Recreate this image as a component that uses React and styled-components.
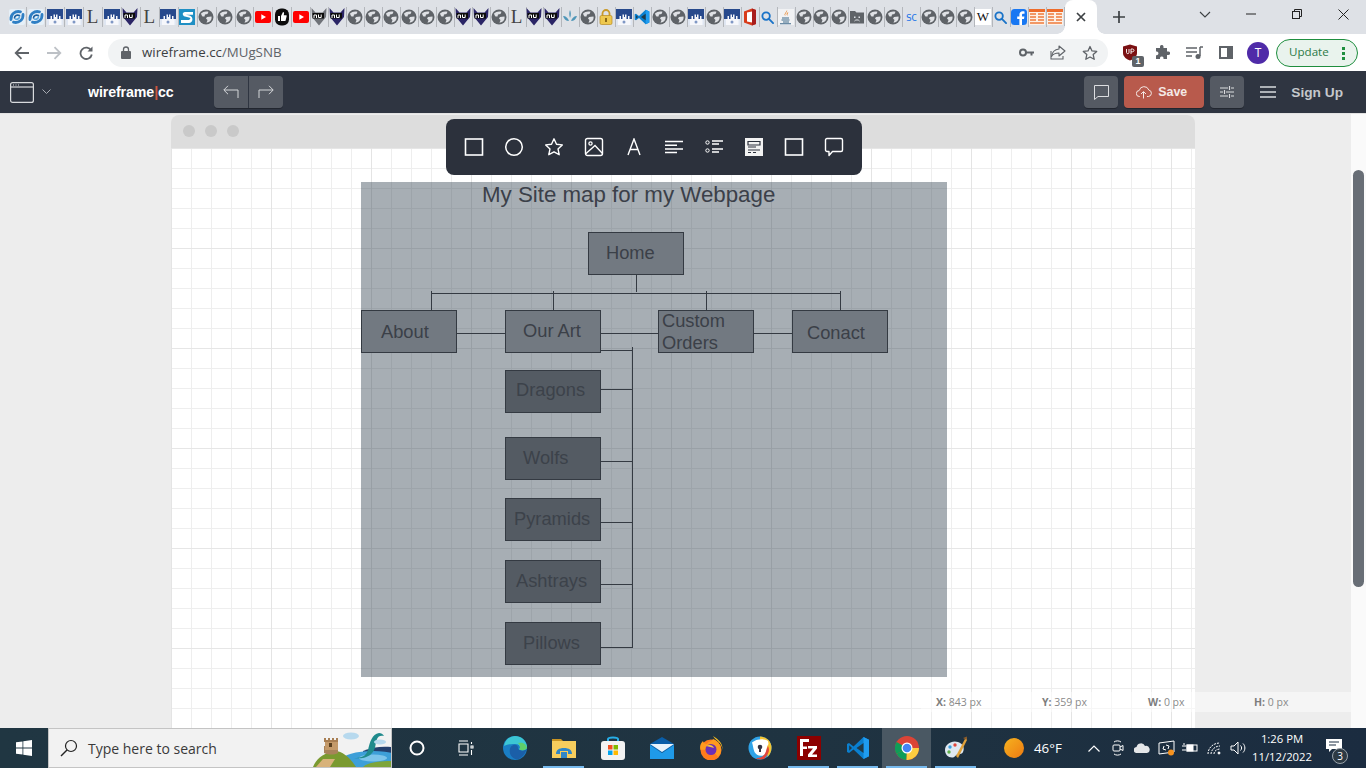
import React from "react";
import styled, { createGlobalStyle } from "styled-components";

const Global = createGlobalStyle`
  html, body { margin: 0; padding: 0; width: 1366px; height: 768px; overflow: hidden; background: #ededed; }
  * { box-sizing: border-box; }
  #root { width: 1366px; height: 768px; }
`;

const Screen = styled.div`
  width: 1366px; height: 768px; display: flex; flex-direction: column; overflow: hidden;
  font-family: "Liberation Sans", Arial, sans-serif;
`;

/* ---------- browser tab strip ---------- */
const TabStrip = styled.div`
  height: 34px; flex: none; background: #dee1e6; display: flex; align-items: center; padding-left: 7.5px;
`;
const TabSlot = styled.div`
  width: ${p => p.$w}px; height: 20px; flex: none; display: flex; align-items: center; justify-content: center;
  box-shadow: 1px 0 0 #b4b7bc;
`;
const ActiveTab = styled.div`
  width: 32px; height: 34px; flex: none; margin-left: 1px; background: #fff; border-radius: 8px 8px 0 0;
  display: flex; align-items: center; justify-content: center; position: relative; align-self: flex-end;
  &::before, &::after { content: ""; position: absolute; bottom: 0; width: 8px; height: 8px; }
  &::before { left: -8px; background: radial-gradient(circle at 0 0, #dee1e6 7.5px, #fff 8px); }
  &::after { right: -8px; background: radial-gradient(circle at 100% 0, #dee1e6 7.5px, #fff 8px); }
`;
const NewTab = styled.div`
  width: 20px; height: 20px; margin-left: 12px; display: flex; align-items: center; justify-content: center;
`;
const WinControls = styled.div`
  margin-left: auto; display: flex; height: 34px;
`;
const WinBtn = styled.div`
  width: 46px; display: flex; align-items: center; justify-content: center; padding-bottom: 6px;
`;
const TabLetter = styled.span`
  font-family: "Liberation Serif", serif; font-size: 19px; line-height: 16px; color: #444;
`;
const WikiBox = styled.span`
  width: 16px; height: 16px; background: #fff; color: #111; font-family: "Liberation Serif", serif;
  font-size: 13px; line-height: 16px; text-align: center; display: block;
`;
const SCText = styled.span`
  font-family: "DejaVu Sans Mono", monospace; font-size: 9.5px; color: #1a73e8; letter-spacing: -0.5px;
`;

/* ---------- browser toolbar ---------- */
const Toolbar = styled.div`
  height: 37px; flex: none; background: #fff; display: flex; align-items: center; position: relative;
`;
const NavBtn = styled.div`
  width: 32px; height: 28px; display: flex; align-items: center; justify-content: center; flex: none;
`;
const NavGroup = styled.div`
  display: flex; padding-left: 6px; width: 108px; flex: none;
`;
const Omnibox = styled.div`
  width: 1000px; height: 28px; flex: none; background: #f1f3f4; border-radius: 14px; display: flex; align-items: center;
  padding: 0 8px 0 13px;
`;
const Url = styled.div`
  margin-left: 11px; padding-bottom: 2px; font-family: "Open Sans", sans-serif; font-size: 13.3px; color: #5f6368;
  span { color: #3c4043; }
`;
const OmniIcons = styled.div`
  margin-left: auto; display: flex; gap: 12px;
`;
const OmniIcon = styled.div`
  width: 20px; height: 20px; display: flex; align-items: center; justify-content: center;
`;
const ExtGroup = styled.div`
  display: flex; margin-left: 6px;
`;
const ExtBtn = styled.div`
  width: 32px; height: 28px; display: flex; align-items: center; justify-content: center; position: relative; flex: none;
`;
const ExtBadge = styled.span`
  position: absolute; right: 2px; bottom: 0; width: 12px; height: 11px; background: #5f6368; color: #fff; font-size: 9px;
  font-weight: 700; line-height: 11px; text-align: center; border-radius: 2px;
`;
const Avatar = styled.div`
  width: 22px; height: 22px; border-radius: 50%; background: #4f2ba8; color: #fff; font-family: "Open Sans", sans-serif;
  font-size: 12px; line-height: 22px; text-align: center;
`;
const UpdatePill = styled.div`
  width: 82px; height: 28px; margin-left: 2px; padding-bottom: 2px; border: 1px solid #1e8e3e; border-radius: 14px; background: #e9f3ed; display: flex; align-items: center;
  padding-left: 12px; color: #2b7a47; font-family: "Open Sans", sans-serif; font-size: 11.6px; position: relative; flex: none;
`;
const Kebab = styled.div`
  position: absolute; right: 12px; top: 7px; width: 3px; height: 13px;
  background: radial-gradient(circle at 1.5px 1.5px, #1e8e3e 1.5px, transparent 1.6px) 0 0 / 3px 5px repeat-y;
`;

/* ---------- wireframe app bar ---------- */
const AppBar = styled.div`
  height: 42px; flex: none; background: #2f3541; display: flex; align-items: center; padding: 0 23px 0 10px;
  box-shadow: 0 1px 0 #e2e2e2; position: relative; z-index: 2;
`;
const Chevron = styled.div`
  margin-left: 8px; width: 10px; display: flex;
`;
const Logo = styled.div`
  margin-left: 36px; width: 86px; flex: none; color: #fff; font-size: 14.2px; font-weight: 700; letter-spacing: -0.1px; white-space: nowrap;
  span { color: #c9553f; font-weight: 700; }
`;
const HistoryGroup = styled.div`
  margin-left: 40px; display: flex; height: 32px; border-radius: 4px; overflow: hidden; box-shadow: 0 1px 0 #22262f;
`;
const HistoryBtn = styled.div`
  width: 34px; background: #555a63; display: flex; align-items: center; justify-content: center;
  & + & { margin-left: 1px; }
`;
const BarRight = styled.div`
  margin-left: auto; display: flex; align-items: center;
`;
const SquareBtn = styled.div`
  width: 34px; height: 32px; border-radius: 4px; background: #555a63; display: flex; align-items: center; justify-content: center;
  margin-right: ${p => p.$mr || 0}px; box-shadow: 0 1px 0 #22262f;
`;
const SaveBtn = styled.div`
  width: 80px; height: 32px; border-radius: 4px; background: #b85a4c; color: #f4e9e6; margin-right: 6px;
  display: flex; align-items: center; gap: 6px; padding-left: 12px; font-size: 12.4px; font-weight: 700;
  box-shadow: 0 1px 0 #22262f;
`;
const SignUp = styled.div`
  color: #c5c8cc; font-size: 13.7px; font-weight: 700; margin-left: 15px;
`;
const MenuIcon = styled.div`
  margin-left: 16px; display: flex;
`;

/* ---------- workspace ---------- */
const Workspace = styled.div`
  flex: 1; min-height: 0; position: relative; background: #ededed; display: flex; padding: 2px 0 0 171px;
`;
const Sheet = styled.div`
  width: 1024px; height: 620px; flex: none; display: flex; flex-direction: column;
`;
const SheetHead = styled.div`
  height: 33px; flex: none; background: #dddddd; border-radius: 8px 8px 0 0; display: flex; align-items: center; gap: 10px; padding: 0 0 2px 12px;
`;
const Dot = styled.span`
  width: 12px; height: 12px; border-radius: 50%; background: #c9c9c9;
`;
const Board = styled.div`
  flex: 1; position: relative; overflow: hidden;
  background-color: #fff;
  background-image:
    linear-gradient(to right, #e4e4e4 1px, transparent 1px),
    linear-gradient(to bottom, #e6e6e6 1px, transparent 1px),
    linear-gradient(to right, #eeeeee 1px, transparent 1px),
    linear-gradient(to bottom, #eeeeee 1px, transparent 1px);
  background-size: 100px 100px, 100px 100px, 20px 20px, 20px 20px;
`;
const Overlay = styled.div`
  position: absolute; left: 190px; top: 34px; width: 586px; height: 495px; background: rgba(55, 70, 84, 0.44);
`;
const MapTitle = styled.div`
  position: absolute; left: 121px; top: 0; font-size: 22.3px; line-height: 26px; color: #3b4049; white-space: nowrap;
`;
const Links = styled.svg`
  position: absolute; left: 0; top: 0;
`;
const MapNode = styled.div`
  position: absolute; left: ${p => p.$x}px; top: ${p => p.$y}px; width: 96px; height: 43px; border: 1px solid #343a42;
  background: ${p => (p.$sub ? "#545b63" : "#727981")}; color: ${p => (p.$sub ? "#3c424a" : "#3b4048")};
  font-size: 18.3px; line-height: 22px; display: flex; align-items: center; padding-left: ${p => p.$pad}px;
  padding-bottom: ${p => p.$up || 0}px; padding-top: ${p => p.$down || 0}px;
`;
const Palette = styled.div`
  position: absolute; left: 446px; top: 6px; width: 416px; height: 56px; background: #2c313c; border-radius: 8px;
  display: flex; align-items: center; padding: 0 8px; z-index: 3;
`;
const PaletteItem = styled.div`
  width: 40px; height: 40px; display: flex; align-items: center; justify-content: center;
`;
const Track = styled.div`
  position: absolute; right: 0; top: 0; bottom: 0; width: 15px; background: #fafafa;
`;
const Thumb = styled.div`
  position: absolute; left: 2px; top: 57px; width: 11px; height: 417px; border-radius: 6px; background: #686e76;
`;
const StatusBar = styled.div`
  position: absolute; left: 921px; right: 15px; top: 579px; height: 20px; background: rgba(255,255,255,0.45);
  display: flex; align-items: center; padding-left: 15px; font-family: "Open Sans", sans-serif; font-size: 10.5px; color: #8a8a8a;
`;
const StatItem = styled.div`
  width: 106px; flex: none; white-space: nowrap;
  b { color: #7d7d7d; }
`;

/* ---------- taskbar ---------- */
const Taskbar = styled.div`
  height: 40px; flex: none; background: linear-gradient(to right, #203642, #1f3341 60%, #1b2c40); display: flex; align-items: stretch; position: relative; z-index: 4;
`;
const StartBtn = styled.div`
  width: 48px; display: flex; align-items: center; justify-content: center; flex: none;
`;
const SearchBox = styled.div`
  width: 344px; flex: none; background: #f2f2f2; border: 1px solid #c4c4c4; display: flex; align-items: center; padding-left: 11px;
  position: relative; overflow: hidden; color: #3a3a3a; font-family: "Open Sans", sans-serif; font-size: 14px;
  span { margin-left: 10px; }
`;
const SearchArt = styled.svg`
  position: absolute; right: 0; bottom: 0;
`;
const TaskSlot = styled.div`
  width: 49px; flex: none; display: flex; align-items: center; justify-content: center; position: relative;
  background: ${p => (p.$active ? "#4a5863" : "transparent")};
  ${p => p.$running && `&::after { content: ""; position: absolute; left: 4px; right: 4px; bottom: 0; height: 2px; background: #76b9ed; }`}
`;
const Tray = styled.div`
  margin-left: auto; display: flex; align-items: center; color: #fff; font-family: "Open Sans", sans-serif; font-size: 13.5px; padding-right: 12px;
`;
const Weather = styled.div`
  display: flex; align-items: center; gap: 10px; width: 70px; margin-right: 8px; font-size: 13.3px;
`;
const TrayIcon = styled.div`
  width: 24px; height: 40px; display: flex; align-items: center; justify-content: center;
`;
const Clock = styled.div`
  width: 64px; text-align: center; font-size: 11.3px; line-height: 18px;
`;
const NotifyBtn = styled.div`
  width: 40px; height: 40px; position: relative; display: flex; align-items: center; justify-content: center; padding-bottom: 4px;
`;
const NotifyBadge = styled.span`
  position: absolute; left: 18px; top: 20px; width: 16px; height: 16px; border-radius: 50%; background: #2d3a44; border: 1px solid #9aa3aa;
  color: #fff; font-size: 10px; line-height: 14px; text-align: center;
`;

/* ---------- favicons ---------- */
const Swirl = () => (
  <svg width="16" height="16" viewBox="0 0 16 16" fill="none">
    <rect width="16" height="16" rx="2" fill="#e6f0f8"/>
    <path d="M2 10.500C1.500 5.500 6 1.500 11.500 2.800" stroke="#2f7fc4" strokeWidth="2.800" strokeLinecap="round"/>
    <path d="M14 5.500C14.500 10.500 10 14.500 4.500 13.200" stroke="#2f7fc4" strokeWidth="2.800" strokeLinecap="round"/>
    <path d="M5.500 9C5.500 6.500 8 5.500 10.500 6.500" stroke="#1b5f9e" strokeWidth="1.600" strokeLinecap="round"/>
    <path d="M10.500 7.500C10.500 9.500 8.500 10.800 6.500 10" stroke="#5aa5dc" strokeWidth="1.600" strokeLinecap="round"/>
  </svg>
);
const Castle = () => (
  <svg width="16" height="16" viewBox="0 0 16 16">
    <rect width="16" height="16" fill="#dfe6f2"/>
    <rect width="16" height="10" fill="#27498c"/>
    <path d="M2 16V10h1.500V7H5v3h1.500V5.500H8V8h1V5.500h1.500V10H12V7h1.500v3H14.500v6Z" fill="#f6f7fb"/>
    <circle cx="8" cy="13" r="1.500" fill="#7f97c4"/>
  </svg>
);
const Fox = ({ gray }) => (
  <svg width="16" height="18" viewBox="0 0 16 18">
    <path d="M0.500 0L4.500 4.500H11.500L15.500 0L15 9L8 17.500L1 9Z" fill={gray ? "#6f7278" : "#2b2566"}/>
    <rect x="1.500" y="5" width="11.500" height="5.500" fill="#0c0c0c"/>
    <path d="M3 10V7h2.500v3M7.500 6.500V9.500h2.700V6.500" fill="none" stroke="#fff" strokeWidth="1"/>
  </svg>
);
const STile = () => (
  <svg width="16" height="16" viewBox="0 0 16 16">
    <rect width="16" height="16" fill="#1f8fc4"/>
    <path d="M14 3H6C3 3 3 7 6 7.500L10 8.500C12.500 9 11 11 9 11H2V14H10C14 14 15 8 10.500 6.500L6.800 5.800H14Z" fill="#fff"/>
  </svg>
);
const Globe = () => (
  <svg width="16" height="16" viewBox="0 0 16 16">
    <circle cx="8" cy="8" r="7.500" fill="#5f6368"/>
    <path d="M3 4.500C5 2.500 8 2 10.500 2.800L9.500 5L7 5.500L6.500 7.500L4.500 7.500L3.500 6Z" fill="#dfe1e5"/>
    <path d="M9 8L13.500 7.500C14 9.500 13 12 11 13L8.500 13.700L9.500 11L8 9.500Z" fill="#dfe1e5"/>
  </svg>
);
const YT = () => (
  <svg width="16" height="16" viewBox="0 0 16 16">
    <rect y="2" width="16" height="12" rx="2" fill="#f00"/>
    <path d="M6.300 5.300L11 8L6.300 10.700Z" fill="#fff"/>
  </svg>
);
const Thumb2 = () => (
  <svg width="16" height="18" viewBox="0 0 16 18">
    <rect x="1" y="0.500" width="14" height="17" rx="6" fill="#0c0c0c"/>
    <path d="M4 8h2v5H4ZM7 8l2-4c1 0 1.300.8 1 2l-.3 1.300H12c.6 0 .8.6.6 1.100l-1 4c-.1.4-.4.6-.8.6H7Z" fill="#fff"/>
  </svg>
);
const Splash = () => (
  <svg width="16" height="16" viewBox="0 0 16 16" fill="#4f96b8">
    <path d="M8 1c1 2 1.300 5 0 8c-1-3-1-6 0-8Z"/>
    <path d="M1 7c3 0 5 2 6 5c-3 0-5-2-6-5Z"/>
    <path d="M15 7c-3 0-5 2-6 5c3 0 5-2 6-5Z"/>
  </svg>
);
const Padlock = () => (
  <svg width="14" height="16" viewBox="0 0 14 16">
    <path d="M3.500 7V4.500a3.500 3.500 0 0 1 7 0V7" fill="none" stroke="#c99a2a" strokeWidth="1.800"/>
    <rect x="1" y="6.500" width="12" height="9" rx="1.500" fill="#eec84e" stroke="#b88a20" strokeWidth=".7"/>
    <rect x="6" y="9" width="2" height="4" fill="#8c6a16"/>
  </svg>
);
const VSCode = ({ size = 16 }) => (
  <svg width={size} height={size} viewBox="0 0 24 24">
    <path d="M17.500 1L23 3.700V20.300L17.500 23L7.500 13.500L3 17L1 16V8L3 7L7.500 10.500Z" fill="#0a7fcf"/>
    <path d="M17.500 1L23 3.700V20.300L17.500 23Z" fill="#1f9cf0"/>
    <path d="M17.500 7L10.500 12L17.500 17Z" fill="#203a48"/>
    <path d="M3.200 9.200L6 12L3.200 14.800Z" fill="#203a48"/>
  </svg>
);
const Office = () => (
  <svg width="14" height="18" viewBox="0 0 14 18">
    <path d="M1 3.500L9 0.500L13 2V16L9 17.500L1 14.500Z" fill="#d83b1a"/>
    <path d="M4 4.500L9 3.500V14.500L4 13.500Z" fill="#fff"/>
    <path d="M9 0.500L13 2V16L9 17.500Z" fill="#a81d1d"/>
  </svg>
);
const Lens = () => (
  <svg width="13" height="13" viewBox="0 0 14 14" fill="none" stroke="#1a73c8" strokeWidth="2">
    <circle cx="5.500" cy="5.500" r="4"/><path d="M8.500 8.500L13 13" strokeLinecap="round"/>
  </svg>
);
const Java = () => (
  <svg width="16" height="16" viewBox="0 0 16 16">
    <rect width="16" height="16" fill="#f1f2f4"/>
    <path d="M9 1c1 2-3 3.500-1.500 6c-2.500-2 1-3.500 1.500-6Z" fill="#e76f00"/>
    <path d="M10.500 3c-2 1-2.500 2-1 4c-.5-1.500 0-2.500 1-4Z" fill="#e76f00"/>
    <path d="M4 9h7M3.500 11h8M5 13h6M2 14.800h11" stroke="#3f6a8a" strokeWidth="1.100" fill="none"/>
  </svg>
);
const SadFolder = () => (
  <svg width="16" height="16" viewBox="0 0 16 16">
    <path d="M1 2h5l1.500 1.500H15v11H1Z" fill="#5f6368"/>
    <rect x="5" y="7.500" width="1.500" height="1.500" fill="#dee1e6"/><rect x="9.500" y="7.500" width="1.500" height="1.500" fill="#dee1e6"/>
    <path d="M5.500 12c1-1.500 4-1.500 5 0" stroke="#dee1e6" fill="none"/>
  </svg>
);
const FB = () => (
  <svg width="16" height="16" viewBox="0 0 16 16">
    <rect width="16" height="16" rx="3.500" fill="#1877f2"/>
    <path d="M11 16V10h2l.4-2.500H11V6c0-.8.4-1.300 1.300-1.300h1.200V2.500C13 2.400 12.300 2.300 11.700 2.300C9.700 2.300 8.400 3.500 8.400 5.700v1.800H6.200V10h2.200v6Z" fill="#fff"/>
  </svg>
);
const OrangeDoc = () => (
  <svg width="16" height="16" viewBox="0 0 16 16">
    <rect width="16" height="16" fill="#fdf1e7"/>
    <rect width="16" height="3" fill="#ee6c2b"/>
    <path d="M1 5h6M1 8h6M1 11h6M1 14h14M9 5h6M9 8h6M9 11h6" stroke="#ee7b3c" strokeWidth="1.400"/>
  </svg>
);

const tabs = [
  "s","s","c","c","L","c","f","L","c","S","g","g","g","y","t","y",
  "F","f","g","g","g","g","g","g","f","f","g","L","f","f","p","g","k","c","v","g","g","c","g","c","o","l","j",
  "g","g","g","d","g","g","sc","g","g","g","w","l","b","r","r",
];
const favicon = k => {
  switch (k) {
    case "s": return <Swirl />;
    case "c": return <Castle />;
    case "L": return <TabLetter>L</TabLetter>;
    case "f": return <Fox />;
    case "F": return <Fox gray />;
    case "S": return <STile />;
    case "g": return <Globe />;
    case "y": return <YT />;
    case "t": return <Thumb2 />;
    case "p": return <Splash />;
    case "k": return <Padlock />;
    case "v": return <VSCode />;
    case "o": return <Office />;
    case "l": return <Lens />;
    case "j": return <Java />;
    case "d": return <SadFolder />;
    case "sc": return <SCText>SC</SCText>;
    case "w": return <WikiBox>W</WikiBox>;
    case "b": return <FB />;
    default: return <OrangeDoc />;
  }
};

const S = ({ w = 16, h = 16, vb, children, stroke = "#fff", sw = 1.300 }) => (
  <svg width={w} height={h} viewBox={vb || `0 0 ${w} ${h}`} fill="none" stroke={stroke} strokeWidth={sw}>{children}</svg>
);

const nodes = [
  { label: "Home", x: 227, y: 50, pad: 17, up: 2 },
  { label: "About", x: 0, y: 128, pad: 19 },
  { label: "Our Art", x: 144, y: 128, pad: 17, up: 2 },
  { label: <>Custom<br />Orders</>, x: 297, y: 128, pad: 3 },
  { label: "Conact", x: 431, y: 128, pad: 14, down: 2 },
  { label: "Dragons", x: 144, y: 188, pad: 10, sub: 1, up: 4 },
  { label: "Wolfs", x: 144, y: 255, pad: 17, sub: 1, up: 2 },
  { label: "Pyramids", x: 144, y: 316, pad: 8, sub: 1, up: 2 },
  { label: "Ashtrays", x: 144, y: 378, pad: 10, sub: 1, up: 2 },
  { label: "Pillows", x: 144, y: 440, pad: 17, sub: 1, up: 2 },
];

const linkPath =
  "M275.500 93V110M70 111.500H479.500M70.500 109V128M192.500 109V128M345.500 109V128M479.500 109V128" +
  "M96 151.500H144M240 151.500H297M393 151.500H431" +
  "M271.500 165V466M240 168.500H271M240 207.500H271M240 279.500H271M240 340.500H271M240 402.500H271M240 465.500H271";

const paletteIcons = [
  <S w={20} h={20}><rect x="1.500" y="2" width="17" height="16" strokeWidth="1.600"/></S>,
  <S w={20} h={20}><circle cx="10" cy="10" r="8.300" strokeWidth="1.500"/></S>,
  <S w={20} h={20}><path d="M10 1.800l2.500 5.400 5.800.7-4.300 4 1.200 5.800L10 14.800l-5.200 2.900L6 11.900 1.700 7.900l5.800-.7Z" strokeLinejoin="round" strokeWidth="1.400"/></S>,
  <S w={20} h={20}><rect x="1.500" y="1.500" width="17" height="17" rx="2" strokeWidth="1.400"/><circle cx="6.500" cy="6.500" r="1.600"/><path d="M1.500 17L11 8.500l7.500 8" strokeWidth="1.300"/></S>,
  <S w={14} h={18}><path d="M1 17L7 1l6 16M3 11.500h8" strokeWidth="1.400"/></S>,
  <S w={18} h={14}><path d="M0 1.500h18M0 5.200h12M0 8.900h18M0 12.600h12" strokeWidth="1.500"/></S>,
  <S w={18} h={16}><circle cx="2.500" cy="3.500" r="1.700" strokeWidth="1"/><circle cx="2.500" cy="11.500" r="1.700" strokeWidth="1"/><path d="M7 2h11M7 5h7M7 10h11M7 13h7" strokeWidth="1.300"/></S>,
  <svg width="18" height="18" viewBox="0 0 18 18"><rect width="18" height="18" fill="#f2f2f2"/><path d="M3 3.500h12v3.500H3ZM3 9h8M3 12h12M3 14.500h3M8 14.500h3" stroke="#2c313c" strokeWidth="1.200" fill="none"/></svg>,
  <S w={20} h={20}><rect x="1.500" y="2" width="17" height="16" strokeWidth="1.600"/></S>,
  <S w={20} h={20}><path d="M3 1.500h14c.8 0 1.500.7 1.500 1.500v10c0 .8-.7 1.500-1.500 1.500H8.500L5 18.500v-4H3c-.8 0-1.500-.7-1.500-1.500V3c0-.8.7-1.500 1.500-1.500Z" strokeWidth="1.400" strokeLinejoin="round"/></S>,
];

export default function App() {
  return (
    <Screen>
      <Global />
      <TabStrip>
        {tabs.map((k, i) => (
          <TabSlot key={i} $w={i < 16 ? 18.93 : 17.95}>{favicon(k)}</TabSlot>
        ))}
        <ActiveTab>
          <S w={10} h={10} stroke="#3c4043" sw={1.700}><path d="M1 1l8 8M9 1l-8 8"/></S>
        </ActiveTab>
        <NewTab>
          <S w={12} h={12} stroke="#3c4043" sw={1.700}><path d="M6 0v12M0 6h12"/></S>
        </NewTab>
        <WinControls>
          <WinBtn><S w={12} h={7} stroke="#3c4043" sw={1.100}><path d="M1 1l5 5 5-5"/></S></WinBtn>
          <WinBtn><S w={10} h={2} stroke="#222" sw={1}><path d="M0 1h10"/></S></WinBtn>
          <WinBtn><S w={10} h={10} stroke="#222" sw={1}><rect x=".5" y="2.500" width="7" height="7"/><path d="M2.500 2.500V.5h7v7H7.500"/></S></WinBtn>
          <WinBtn><S w={11} h={11} stroke="#222" sw={1}><path d="M.5.5l10 10M10.500.5l-10 10"/></S></WinBtn>
        </WinControls>
      </TabStrip>

      <Toolbar>
        <NavGroup>
          <NavBtn><S w={16} h={14} stroke="#5f6368" sw={1.800}><path d="M15 7H2M7.500 1.200L1.700 7l5.800 5.800"/></S></NavBtn>
          <NavBtn><S w={16} h={14} stroke="#bdc1c6" sw={1.800}><path d="M1 7h13M8.500 1.200L14.300 7l-5.800 5.800"/></S></NavBtn>
          <NavBtn><S w={14} h={14} stroke="#5f6368" sw={1.800}><path d="M12.200 4.500A5.700 5.700 0 1 0 12.800 8.500"/><path d="M13.500 0.500V5.500H8.500Z" fill="#5f6368" stroke="none"/></S></NavBtn>
        </NavGroup>
        <Omnibox>
          <svg width="10" height="13" viewBox="0 0 10 13"><path d="M2.500 5V3.500a2.500 2.500 0 0 1 5 0V5" fill="none" stroke="#5f6368" strokeWidth="1.300"/><rect y="5" width="10" height="8" rx="1" fill="#5f6368"/></svg>
          <Url><span>wireframe.cc</span>/MUgSNB</Url>
          <OmniIcons>
            <OmniIcon><svg width="15" height="9" viewBox="0 0 15 9"><circle cx="4" cy="4.500" r="3" fill="none" stroke="#5f6368" strokeWidth="2"/><path d="M7 3.500h8v2h-1.500v2h-2v-2H7Z" fill="#5f6368"/></svg></OmniIcon>
            <OmniIcon><S w={16} h={15} stroke="#5f6368" sw={1.100}><path d="M9 1l6 5-6 5V8C5.500 8 3 9 1.500 11.500 2 7.500 4.500 4.500 9 4Z" strokeLinejoin="round"/><path d="M1 6v8h12v-3"/></S></OmniIcon>
            <OmniIcon><S w={16} h={16} stroke="#5f6368" sw={1.300}><path d="M8 1.500l2 4.400 4.700.5-3.500 3.200 1 4.700L8 12l-4.200 2.300 1-4.700L1.300 6.400 6 5.900Z" strokeLinejoin="round"/></S></OmniIcon>
          </OmniIcons>
        </Omnibox>
        <ExtGroup>
          <ExtBtn>
            <svg width="16" height="17" viewBox="0 0 16 17"><path d="M8 0.500L15 2.500V9C15 13 11 15.500 8 16.500C5 15.500 1 13 1 9V2.500Z" fill="#7b1113"/><path d="M4.500 5v3.500c0 1.500 2.500 1.500 2.500 0V5M9 10V5h1.500c2 0 2 2.800 0 2.800H9" stroke="#fff" strokeWidth=".9" fill="none"/></svg>
            <ExtBadge>1</ExtBadge>
          </ExtBtn>
          <ExtBtn><svg width="16" height="16" viewBox="0 0 16 16"><path d="M6 1.500a1.800 1.800 0 0 1 3.500 0V3H13v3.500h1.300a1.800 1.800 0 0 1 0 3.600H13V14H9.500v-1.200a1.800 1.800 0 0 0-3.500 0V14H2v-3.800h1a1.900 1.900 0 0 0 0-3.700H2V3h4Z" fill="#5f6368"/></svg></ExtBtn>
          <ExtBtn><svg width="17" height="14" viewBox="0 0 17 14"><path d="M0 2h11M0 6h11M0 10h6" stroke="#5f6368" strokeWidth="1.500"/><path d="M14 1v9" stroke="#5f6368" strokeWidth="1.500"/><path d="M14 1h3" stroke="#5f6368" strokeWidth="1.500"/><circle cx="12" cy="10.500" r="2.500" fill="#5f6368"/></svg></ExtBtn>
          <ExtBtn><svg width="14" height="13" viewBox="0 0 14 13"><rect x="1" y="1" width="12" height="11" fill="none" stroke="#5f6368" strokeWidth="2"/><rect x="8" y="1" width="5" height="11" fill="#5f6368"/></svg></ExtBtn>
          <ExtBtn><Avatar>T</Avatar></ExtBtn>
        </ExtGroup>
        <UpdatePill>Update<Kebab /></UpdatePill>
      </Toolbar>

      <AppBar>
        <svg width="24" height="21" viewBox="0 0 24 21" fill="none" stroke="#d8dadd" strokeWidth="1.200"><rect x=".6" y=".6" width="22.800" height="19.800" rx="2"/><path d="M1 5h22"/><path d="M3 3h1M5.500 3h1M8 3h1" strokeWidth="1"/></svg>
        <Chevron><S w={9} h={6} stroke="#a9acb2" sw={1}><path d="M.5.5l4 4 4-4"/></S></Chevron>
        <Logo>wireframe<span>|</span>cc</Logo>
        <HistoryGroup>
          <HistoryBtn><S w={16} h={14} stroke="#d4d6d9" sw={1}><path d="M15 13V5H1M5 .8L.8 5 5 9.200"/></S></HistoryBtn>
          <HistoryBtn><S w={16} h={14} stroke="#d4d6d9" sw={1}><path d="M1 13V5h14M11 .8L15.200 5 11 9.200"/></S></HistoryBtn>
        </HistoryGroup>
        <BarRight>
          <SquareBtn $mr={6}><S w={15} h={15} stroke="#dcdde0" sw={1}><path d="M.5.5h14v11H4L.5 14.500Z" strokeLinejoin="round"/></S></SquareBtn>
          <SaveBtn>
            <S w={16} h={14} stroke="#f4e9e6" sw={1}><path d="M4 11.500H3.500a3 3 0 0 1-.3-6A5 5 0 0 1 12.800 5a3.300 3.300 0 0 1-.3 6.500H11"/><path d="M7.500 13.500V7M5 9l2.500-2.500L10 9"/></S>
            Save
          </SaveBtn>
          <SquareBtn><S w={14} h={14} stroke="#dcdde0" sw={1.100}><path d="M0 3h8M11 3h3M0 7h3M6 7h8M0 11h8M11 11h3M9.500 1v4M4.500 5v4M9.500 9v4"/></S></SquareBtn>
          <MenuIcon><S w={16} h={12} stroke="#d8dadd" sw={1.400}><path d="M0 1h16M0 6h16M0 11h16"/></S></MenuIcon>
          <SignUp>Sign Up</SignUp>
        </BarRight>
      </AppBar>

      <Workspace>
        <Sheet>
          <SheetHead><Dot /><Dot /><Dot /></SheetHead>
          <Board>
            <Overlay>
              <MapTitle>My Site map for my Webpage</MapTitle>
              <Links width="586" height="495" fill="none" stroke="#343a42" strokeWidth="1"><path d={linkPath} /></Links>
              {nodes.map((n, i) => (
                <MapNode key={i} $x={n.x} $y={n.y} $pad={n.pad} $sub={n.sub} $up={n.up} $down={n.down}>
                  <span>{n.label}</span>
                </MapNode>
              ))}
            </Overlay>
          </Board>
        </Sheet>
        <Palette>
          {paletteIcons.map((ic, i) => <PaletteItem key={i}>{ic}</PaletteItem>)}
        </Palette>
        <StatusBar>
          <StatItem><b>X:</b> 843 px</StatItem>
          <StatItem><b>Y:</b> 359 px</StatItem>
          <StatItem><b>W:</b> 0 px</StatItem>
          <StatItem><b>H:</b> 0 px</StatItem>
        </StatusBar>
        <Track><Thumb /></Track>
      </Workspace>

      <Taskbar>
        <StartBtn>
          <svg width="16" height="16" viewBox="0 0 16 16" fill="#fff"><path d="M0 2.300l6.500-.9v6.200H0ZM7.300 1.300L16 0v7.600H7.300ZM0 8.400h6.500v6.200L0 13.700ZM7.300 8.400H16V16l-8.700-1.300Z"/></svg>
        </StartBtn>
        <SearchBox>
          <svg width="18" height="18" viewBox="0 0 18 18" fill="none" stroke="#222" strokeWidth="1.200"><circle cx="11" cy="7" r="5.500"/><path d="M7 11L1 17" strokeWidth="1.500"/></svg>
          <span>Type here to search</span>
          <SearchArt width="78" height="38" viewBox="0 0 78 38">
            <path d="M50 22c8-4 20-5 28-4v12H50Z" fill="#24406e"/>
            <ellipse cx="60" cy="31" rx="31" ry="9" fill="#3d9fd8"/>
            <ellipse cx="60" cy="29" rx="14" ry="3.500" fill="#7cc4ea"/>
            <path d="M50 38c4-4 14-6 28-6v6Z" fill="#7ea53a"/>
            <path d="M0 38C3 30 10 24 22 22c8 0 16 8 21 16Z" fill="#7a9a30"/>
            <path d="M3 38l7-8h12l-5 8Z" fill="#d8b27a"/>
            <path d="M11 17h14v7c-4 2-9 2-14 0Z" fill="#a8835a"/>
            <rect x="12" y="11" width="13" height="10" fill="#c49a6a"/>
            <path d="M11 9h2v2h2V9h2v2h2V9h2v2h2V9h2v4H11Z" fill="#a87e52"/>
            <rect x="16" y="14" width="3" height="4" fill="#5a4020"/>
            <path d="M41 29c8 0 12-2 14-8c2-8 4-16 11-17c2 0 4 1 5 3c-3-1-6 0-7 3c-2 5-1 10-5 14c-3 4-9 6-18 5Z" fill="#1f8a8c"/>
            <ellipse cx="38" cy="7" rx="8" ry="3.500" fill="#b7d9ee"/>
            <ellipse cx="67" cy="13" rx="6" ry="2.500" fill="#b7d9ee"/>
          </SearchArt>
        </SearchBox>
        <TaskSlot><svg width="16" height="16" viewBox="0 0 16 16"><circle cx="8" cy="8" r="6.500" fill="none" stroke="#fff" strokeWidth="2"/></svg></TaskSlot>
        <TaskSlot><S w={16} h={16} sw={1.100}><path d="M1 1h9M1 15h9M1 4h9v8H1ZM13.500 2v2M13 6h2v2h-2ZM13.500 10v5"/></S></TaskSlot>
        <TaskSlot>
          <svg width="24" height="24" viewBox="0 0 24 24"><circle cx="12" cy="12" r="12" fill="#1a7ec4"/><path d="M1 10C2 3 8 0 12 0c6 0 11 4 12 10 .5 5-6 6-8 3 2-1 1-5-4-5-6 0-9 1-11 2Z" fill="#3cc6d4"/><path d="M24 11c0 3-3 3.500-5 3.500-3 0-4-1-4-3 0-3-4-4-7-1-3 4-1 12 6 13 5-1 9-6 10-12.500Z" fill="#1b5fa8"/><path d="M15 7c4-1 8 0 9 5-1 2-5 3-7.500 1.500 1-2 .5-5-1.500-6.500Z" fill="#5fd06a"/></svg>
        </TaskSlot>
        <TaskSlot $running>
          <svg width="24" height="20" viewBox="0 0 24 20"><path d="M0 1h9l2 2h-11Z" fill="#c99422"/><path d="M0 3h24v17H0Z" fill="#f7cd5d"/><path d="M4 16c0-4 3-6 8-6s8 2 8 6h-4v-3H8v3Z" fill="#2f86c7"/><rect x="9" y="14" width="6" height="6" fill="#2f86c7"/></svg>
        </TaskSlot>
        <TaskSlot>
          <svg width="24" height="24" viewBox="0 0 24 24"><path d="M7 6V3c0-2 10-2 10 0v3" fill="none" stroke="#27aee8" strokeWidth="2"/><rect y="5" width="24" height="19" rx="3" fill="#f2f2f2"/><rect x="7" y="9" width="4.500" height="4.500" fill="#f25022"/><rect x="12.500" y="9" width="4.500" height="4.500" fill="#7fba00"/><rect x="7" y="14.500" width="4.500" height="4.500" fill="#00a4ef"/><rect x="12.500" y="14.500" width="4.500" height="4.500" fill="#ffb900"/></svg>
        </TaskSlot>
        <TaskSlot>
          <svg width="24" height="22" viewBox="0 0 24 22"><path d="M0 7L12 0l12 7v2L12 16 0 9Z" fill="#0a5ea8"/><path d="M0 7h24L12 15Z" fill="#e8f4fc"/><path d="M0 8l12 8 12-8v14H0Z" fill="#1f9ae8"/></svg>
        </TaskSlot>
        <TaskSlot>
          <svg width="24" height="24" viewBox="0 0 24 24"><circle cx="12" cy="14" r="10.500" fill="#ff7b1c"/><path d="M14 0c5 3 10 7 9.500 14C23 6 17 5 14 0Z" fill="#ffc11e"/><path d="M1.500 14C0 9 3 6 4 5c0 2 2 3 4 3 2-3 5-3 6-5 5 2 8 6 8 11 0 2-1 5-3 7-3-6-14-8-17.500-7Z" fill="#ff9a1f"/><circle cx="12" cy="13.500" r="5.500" fill="#6b2fb5"/><path d="M7 10c3-2 7-1 8 2-2-1-5-1-8-2Z" fill="#ffcc33"/></svg>
        </TaskSlot>
        <TaskSlot>
          <svg width="24" height="24" viewBox="0 0 24 24"><circle cx="12" cy="12" r="11.500" fill="#2fa3e8"/><path d="M12 .5a11.500 11.500 0 0 1 11.500 11.500c0 4-2 7-4 9C20 14 16 7 12 6Z" fill="#f7c531"/><path d="M4 6.500C8 3 16 2 20 5l.5 3c-3 4-1 8-4 11-5 2-8 0-10-3C5 12 5 9 4 6.500Z" fill="#fff"/><path d="M16 19c2-2 2-5 4-9 1.500 3 2 7-4 13-2 .5-6 1-8-1 3 .5 6-1 8-3Z" fill="#e2463c"/><circle cx="12" cy="11" r="2.300" fill="#334"/><rect x="11" y="12" width="2" height="4" fill="#334"/></svg>
        </TaskSlot>
        <TaskSlot $running>
          <svg width="24" height="24" viewBox="0 0 24 24"><rect width="24" height="24" fill="#8c0000"/><path d="M3 3v17h3v-7h4v-2.500H6V6h6V3Z" fill="#fff"/><path d="M11 10h9v2.500l-5 6h5V21h-9v-2.500l5-6h-5Z" fill="#fff"/></svg>
        </TaskSlot>
        <TaskSlot $running><VSCode size={24} /></TaskSlot>
        <TaskSlot $running $active>
          <svg width="24" height="24" viewBox="0 0 24 24"><circle cx="12" cy="12" r="12" fill="#db4437"/><path d="M12 12L1.600 18A12 12 0 0 1 1.600 6Z" fill="#0f9d58"/><path d="M12 12l-.5 12A12 12 0 0 1 1.600 18Z" fill="#0f9d58"/><path d="M12 12h12a12 12 0 0 1-12.500 12Z" fill="#ffcd40"/><circle cx="12" cy="12" r="5.500" fill="#fff"/><circle cx="12" cy="12" r="4.300" fill="#4285f4"/></svg>
        </TaskSlot>
        <TaskSlot $running>
          <svg width="24" height="24" viewBox="0 0 24 24"><path d="M1 14c0-6 7-10 13-8 5 1.500 7 6 5 10-1.500 3-4 1.500-6 2.500-2 1-2 3-5 3-4 0-7-3-7-7.500Z" fill="#dfe8f2"/><circle cx="6" cy="11" r="1.700" fill="#3aa0e0"/><circle cx="11" cy="9" r="1.700" fill="#e2463c"/><circle cx="5" cy="16" r="1.700" fill="#5fb04a"/><path d="M22 1L12 20l2 2 9-18Z" fill="#e0a13a"/><path d="M19 2l3.500 2 .5-3.500Z" fill="#8a5a2a"/></svg>
        </TaskSlot>
        <Tray>
          <Weather>
            <svg width="20" height="20" viewBox="0 0 20 20"><defs><linearGradient id="sun" x1="0" y1="0" x2="1" y2="1"><stop offset="0" stopColor="#f5b31f"/><stop offset="1" stopColor="#ee7a12"/></linearGradient></defs><circle cx="10" cy="10" r="10" fill="url(#sun)"/></svg>
            46°F
          </Weather>
          <TrayIcon><S w={12} h={7} sw={1.200}><path d="M.5 6.500L6 1l5.500 5.500"/></S></TrayIcon>
          <TrayIcon><S w={12} h={16} sw={1}><rect x="1" y="5" width="7" height="6" rx="1"/><path d="M8 7l3-1.500v5L8 9M2 2c2-1.500 5-1.500 7 0M2 14c2 1.500 5 1.500 7 0"/></S></TrayIcon>
          <TrayIcon><svg width="16" height="10" viewBox="0 0 16 10" fill="#e4e6e8"><path d="M3 10a3 3 0 0 1-.5-6A4.500 4.500 0 0 1 11 3a3.500 3.500 0 0 1 2 7Z"/></svg></TrayIcon>
          <TrayIcon><svg width="17" height="16" viewBox="0 0 17 16"><path d="M1 3l15-2v11l-15 2Z" fill="none" stroke="#fff"/><path d="M6 6l-1 3 3 1M10 9l1-3-3-1" fill="none" stroke="#fff"/><circle cx="13" cy="12.500" r="3" fill="#f7921e"/></svg></TrayIcon>
          <TrayIcon><S w={16} h={10} sw={1}><rect x="5" y="2" width="10" height="6"/><rect x="5" y="2" width="6" height="6" fill="#fff"/><path d="M0 3h4M0 7h4M2 0v2"/></S></TrayIcon>
          <TrayIcon><S w={14} h={13} sw={1}><path d="M1 12C1 6 6 1 13 1M4 12c0-4 4-8 9-8M7 12c0-3 3-5 6-5" strokeDasharray="2 1"/><circle cx="12" cy="11" r="1" fill="#fff"/></S></TrayIcon>
          <TrayIcon><S w={16} h={14} sw={1}><path d="M1 5h3l4-4v12l-4-4H1ZM10.500 4.500c1.500 1.500 1.500 3.500 0 5M13 2.500c2.500 2.500 2.500 6.500 0 9"/></S></TrayIcon>
          <Clock>1:26 PM<br />11/12/2022</Clock>
          <NotifyBtn>
            <svg width="16" height="14" viewBox="0 0 16 14" fill="#fff"><path d="M0 0h16v10H6l-3 3v-3H0Z"/><path d="M3 3h10M3 6h7" stroke="#1b2c40" strokeWidth="1"/></svg>
            <NotifyBadge>3</NotifyBadge>
          </NotifyBtn>
        </Tray>
      </Taskbar>
    </Screen>
  );
}
